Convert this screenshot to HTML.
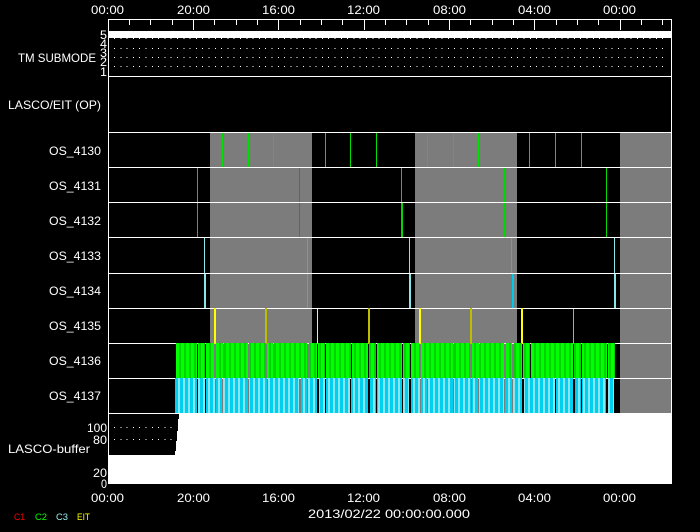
<!DOCTYPE html>
<html><head><meta charset="utf-8"><style>
html,body{margin:0;padding:0;background:#000;width:700px;height:532px;overflow:hidden}
svg{display:block}
text{font-family:"Liberation Sans",sans-serif;fill:#fff;font-size:12px}
</style></head><body>
<svg width="700" height="532" viewBox="0 0 700 532" xmlns="http://www.w3.org/2000/svg">
<defs>
<pattern id="pg" width="5" height="10" patternUnits="userSpaceOnUse" x="176" y="0">
<rect width="5" height="10" fill="#00ff00"/><rect x="3" width="2" height="10" fill="#00d400"/>
</pattern>
<pattern id="pc" width="5" height="10" patternUnits="userSpaceOnUse" x="175" y="0">
<rect width="5" height="10" fill="#00d0f0"/><rect x="3" width="2" height="10" fill="#88e6f0"/>
</pattern>
<mask id="mg" maskUnits="userSpaceOnUse" x="170" y="343" width="450" height="35">
<rect x="170" y="343" width="450" height="35" fill="#fff"/>
<g fill="#000" shape-rendering="crispEdges">
<rect x="197" y="343" width="1" height="35"/><rect x="205" y="343" width="1" height="35"/><rect x="214" y="343" width="2" height="35"/><rect x="223" y="343" width="1" height="35"/><rect x="248" y="343" width="1" height="35"/><rect x="266" y="343" width="1" height="35"/><rect x="273" y="343" width="1" height="35"/><rect x="307" y="343" width="2" height="35"/><rect x="317" y="343" width="1" height="35"/><rect x="325" y="343" width="1" height="35"/><rect x="351" y="343" width="1" height="35"/><rect x="368" y="343" width="1" height="35"/><rect x="376" y="343" width="1" height="35"/><rect x="402" y="343" width="1" height="35"/><rect x="410" y="343" width="1" height="35"/><rect x="419" y="343" width="2" height="35"/><rect x="453" y="343" width="1" height="35"/><rect x="470" y="343" width="2" height="35"/><rect x="479" y="343" width="1" height="35"/><rect x="504" y="343" width="2" height="35"/><rect x="512" y="343" width="2" height="35"/><rect x="522" y="343" width="1" height="35"/><rect x="530" y="343" width="1" height="35"/><rect x="573" y="343" width="1" height="35"/><rect x="581" y="343" width="1" height="35"/><rect x="607" y="343" width="1" height="35"/>
</g></mask>
<mask id="mc" maskUnits="userSpaceOnUse" x="170" y="378" width="450" height="35">
<rect x="170" y="378" width="450" height="35" fill="#fff"/>
<g fill="#000" shape-rendering="crispEdges">
<rect x="197" y="378" width="1" height="35"/><rect x="205" y="378" width="1" height="35"/><rect x="215" y="378" width="1" height="35"/><rect x="222" y="378" width="1" height="35"/><rect x="248" y="378" width="1" height="35"/><rect x="267" y="378" width="1" height="35"/><rect x="299" y="378" width="2" height="35"/><rect x="307" y="378" width="1" height="35"/><rect x="317" y="378" width="2" height="35"/><rect x="325" y="378" width="1" height="35"/><rect x="350" y="378" width="1" height="35"/><rect x="368" y="378" width="2" height="35"/><rect x="376" y="378" width="1" height="35"/><rect x="402" y="378" width="1" height="35"/><rect x="409" y="378" width="2" height="35"/><rect x="420" y="378" width="1" height="35"/><rect x="427" y="378" width="1" height="35"/><rect x="453" y="378" width="1" height="35"/><rect x="471" y="378" width="1" height="35"/><rect x="478" y="378" width="1" height="35"/><rect x="504" y="378" width="1" height="35"/><rect x="512" y="378" width="1" height="35"/><rect x="522" y="378" width="2" height="35"/><rect x="555" y="378" width="1" height="35"/><rect x="573" y="378" width="2" height="35"/><rect x="581" y="378" width="1" height="35"/><rect x="606" y="378" width="2" height="35"/>
</g></mask>
</defs>

<rect width="700" height="532" fill="#000"/>

<g shape-rendering="crispEdges">
<!-- gray regions -->
<g fill="#7c7c7c">
<rect x="210" y="132" width="102" height="281"/>
<rect x="415" y="132" width="102" height="281"/>
<rect x="620" y="132" width="51" height="281"/>
</g>

<!-- frame + separators -->
<g fill="#fff">
<rect x="108" y="19" width="564" height="1"/>
<rect x="108" y="19" width="1" height="465"/>
<rect x="671" y="19" width="1" height="394"/>
<rect x="108" y="76" width="564" height="1"/>
<rect x="108" y="132" width="564" height="1"/>
<rect x="108" y="167" width="564" height="1"/>
<rect x="108" y="202" width="564" height="1"/>
<rect x="108" y="237" width="564" height="1"/>
<rect x="108" y="273" width="564" height="1"/>
<rect x="108" y="308" width="564" height="1"/>
<rect x="108" y="343" width="564" height="1"/>
<rect x="108" y="378" width="564" height="1"/>
<rect x="108" y="413" width="564" height="1"/>
<rect x="108" y="31" width="564" height="7"/>
</g>

<!-- ticks -->
<g fill="#fff">
<rect x="129" y="19" width="1" height="6"/><rect x="150" y="19" width="1" height="6"/><rect x="172" y="19" width="1" height="6"/><rect x="193" y="19" width="1" height="11"/><rect x="214" y="19" width="1" height="6"/><rect x="236" y="19" width="1" height="6"/><rect x="257" y="19" width="1" height="6"/><rect x="278" y="19" width="1" height="11"/><rect x="300" y="19" width="1" height="6"/><rect x="321" y="19" width="1" height="6"/><rect x="342" y="19" width="1" height="6"/><rect x="364" y="19" width="1" height="11"/><rect x="385" y="19" width="1" height="6"/><rect x="406" y="19" width="1" height="6"/><rect x="428" y="19" width="1" height="6"/><rect x="449" y="19" width="1" height="11"/><rect x="470" y="19" width="1" height="6"/><rect x="492" y="19" width="1" height="6"/><rect x="513" y="19" width="1" height="6"/><rect x="534" y="19" width="1" height="11"/><rect x="556" y="19" width="1" height="6"/><rect x="577" y="19" width="1" height="6"/><rect x="598" y="19" width="1" height="6"/><rect x="620" y="19" width="1" height="11"/><rect x="641" y="19" width="1" height="6"/><rect x="662" y="19" width="1" height="6"/>
</g>

<!-- dots -->
<g stroke="#fff" stroke-width="1" stroke-dasharray="1 5.3" fill="none">
<path d="M114 38.5H668M114 48.5H668M114 57.5H668M114 66.5H668"/>
</g>

<!-- OS_4130 -->
<g fill="#00e000">
<rect x="222" y="133" width="1" height="34"/><rect x="248" y="133" width="1" height="34"/><rect x="273" y="133" width="1" height="34"/><rect x="325" y="133" width="1" height="34"/><rect x="350" y="133" width="1" height="34"/><rect x="376" y="133" width="1" height="34"/><rect x="427" y="133" width="1" height="34"/><rect x="453" y="133" width="1" height="34"/><rect x="478" y="133" width="1" height="34"/><rect x="529" y="133" width="1" height="34"/><rect x="555" y="133" width="1" height="34"/><rect x="581" y="133" width="1" height="34"/>
</g>
<!-- OS_4131 / 4132 -->
<g fill="#00d800">
<rect x="197" y="168" width="1" height="34"/><rect x="401" y="168" width="1" height="34"/><rect x="504" y="168" width="1" height="34"/><rect x="606" y="168" width="1" height="34"/>
<rect x="197" y="203" width="1" height="34"/><rect x="401" y="203" width="2" height="34"/><rect x="504" y="203" width="1" height="34"/><rect x="606" y="203" width="1" height="34"/>
</g>
<g fill="#00a800"><rect x="299" y="168" width="1" height="34"/><rect x="299" y="203" width="1" height="34"/></g>

<!-- OS_4133 / 4134 -->
<g fill="#88e6e6">
<rect x="204" y="238" width="1" height="35"/><rect x="409" y="238" width="1" height="35"/><rect x="614" y="238" width="1" height="35"/>
<rect x="204" y="274" width="2" height="34"/><rect x="409" y="274" width="2" height="34"/><rect x="614" y="274" width="2" height="34"/>
</g>
<g fill="#00c8e8">
<rect x="307" y="238" width="1" height="35"/><rect x="511" y="238" width="1" height="35"/>
<rect x="307" y="274" width="1" height="34"/><rect x="512" y="274" width="2" height="34"/>
</g>

<!-- OS_4135 -->
<g fill="#ffff00">
<rect x="214" y="308" width="2" height="36"/><rect x="419" y="308" width="2" height="36"/><rect x="521" y="308" width="2" height="36"/><rect x="317" y="309" width="1" height="35"/>
</g>
<g fill="#bcbc00">
<rect x="265" y="308" width="2" height="36"/><rect x="368" y="308" width="2" height="36"/><rect x="470" y="308" width="2" height="36"/><rect x="573" y="309" width="1" height="35"/>
</g>

<!-- stripes -->
<rect x="176" y="343" width="439" height="35" fill="url(#pg)" mask="url(#mg)"/>
<rect x="175" y="378" width="439" height="35" fill="url(#pc)" mask="url(#mc)"/>

<!-- LASCO buffer -->
<rect x="109" y="414" width="563" height="70" fill="#fff"/>
<rect x="109" y="414" width="70" height="5" fill="#000"/>
<rect x="109" y="419" width="69" height="12" fill="#000"/>
<rect x="109" y="431" width="68" height="10" fill="#000"/>
<rect x="109" y="441" width="67" height="10" fill="#000"/>
<rect x="109" y="451" width="66" height="4" fill="#000"/>
<g stroke="#fff" stroke-width="1" stroke-dasharray="1 5.3" fill="none">
<path d="M114 427.5H177M114 439.5H176"/>
</g>
</g>

<!-- top labels -->
<g>
<text x="91" y="14" textLength="33" lengthAdjust="spacingAndGlyphs">00:00</text>
<text x="177" y="14" textLength="33" lengthAdjust="spacingAndGlyphs">20:00</text>
<text x="262" y="14" textLength="33" lengthAdjust="spacingAndGlyphs">16:00</text>
<text x="347" y="14" textLength="33" lengthAdjust="spacingAndGlyphs">12:00</text>
<text x="433" y="14" textLength="33" lengthAdjust="spacingAndGlyphs">08:00</text>
<text x="518" y="14" textLength="33" lengthAdjust="spacingAndGlyphs">04:00</text>
<text x="603" y="14" textLength="33" lengthAdjust="spacingAndGlyphs">00:00</text>
</g>

<!-- y labels -->
<g>
<text x="100" y="39" textLength="7" lengthAdjust="spacingAndGlyphs">5</text>
<text x="100" y="48" textLength="7" lengthAdjust="spacingAndGlyphs">4</text>
<text x="100" y="57" textLength="7" lengthAdjust="spacingAndGlyphs">3</text>
<text x="100" y="66" textLength="7" lengthAdjust="spacingAndGlyphs">2</text>
<text x="100" y="76" textLength="7" lengthAdjust="spacingAndGlyphs">1</text>
<text x="18" y="62" textLength="78" lengthAdjust="spacingAndGlyphs">TM SUBMODE</text>
<text x="8" y="109" textLength="93" lengthAdjust="spacingAndGlyphs">LASCO/EIT (OP)</text>
<text x="49" y="155" textLength="52" lengthAdjust="spacingAndGlyphs">OS_4130</text>
<text x="49" y="190" textLength="52" lengthAdjust="spacingAndGlyphs">OS_4131</text>
<text x="49" y="225" textLength="52" lengthAdjust="spacingAndGlyphs">OS_4132</text>
<text x="49" y="260" textLength="52" lengthAdjust="spacingAndGlyphs">OS_4133</text>
<text x="49" y="295" textLength="52" lengthAdjust="spacingAndGlyphs">OS_4134</text>
<text x="49" y="330" textLength="52" lengthAdjust="spacingAndGlyphs">OS_4135</text>
<text x="49" y="365" textLength="52" lengthAdjust="spacingAndGlyphs">OS_4136</text>
<text x="49" y="400" textLength="52" lengthAdjust="spacingAndGlyphs">OS_4137</text>
<text x="87" y="432" textLength="20" lengthAdjust="spacingAndGlyphs">100</text>
<text x="93" y="444" textLength="14" lengthAdjust="spacingAndGlyphs">80</text>
<text x="8" y="453" textLength="82" lengthAdjust="spacingAndGlyphs">LASCO-buffer</text>
<text x="93" y="477" textLength="14" lengthAdjust="spacingAndGlyphs">20</text>
<text x="101" y="488" textLength="6" lengthAdjust="spacingAndGlyphs">0</text>
</g>

<!-- bottom labels -->
<g>
<text x="91" y="502" textLength="33" lengthAdjust="spacingAndGlyphs">00:00</text>
<text x="177" y="502" textLength="33" lengthAdjust="spacingAndGlyphs">20:00</text>
<text x="262" y="502" textLength="33" lengthAdjust="spacingAndGlyphs">16:00</text>
<text x="347" y="502" textLength="33" lengthAdjust="spacingAndGlyphs">12:00</text>
<text x="433" y="502" textLength="33" lengthAdjust="spacingAndGlyphs">08:00</text>
<text x="518" y="502" textLength="33" lengthAdjust="spacingAndGlyphs">04:00</text>
<text x="603" y="502" textLength="33" lengthAdjust="spacingAndGlyphs">00:00</text>
<text x="308" y="518" textLength="162" lengthAdjust="spacingAndGlyphs">2013/02/22 00:00:00.000</text>
</g>

<!-- legend -->
<g>
<text x="14" y="520" textLength="11" lengthAdjust="spacingAndGlyphs" style="fill:#ff0000;font-size:9px">C1</text>
<text x="35" y="520" textLength="12" lengthAdjust="spacingAndGlyphs" style="fill:#00ff00;font-size:9px">C2</text>
<text x="56" y="520" textLength="12" lengthAdjust="spacingAndGlyphs" style="fill:#99eeee;font-size:9px">C3</text>
<text x="77" y="520" textLength="13" lengthAdjust="spacingAndGlyphs" style="fill:#ffff00;font-size:9px">EIT</text>
</g>
</svg>
</body></html>
